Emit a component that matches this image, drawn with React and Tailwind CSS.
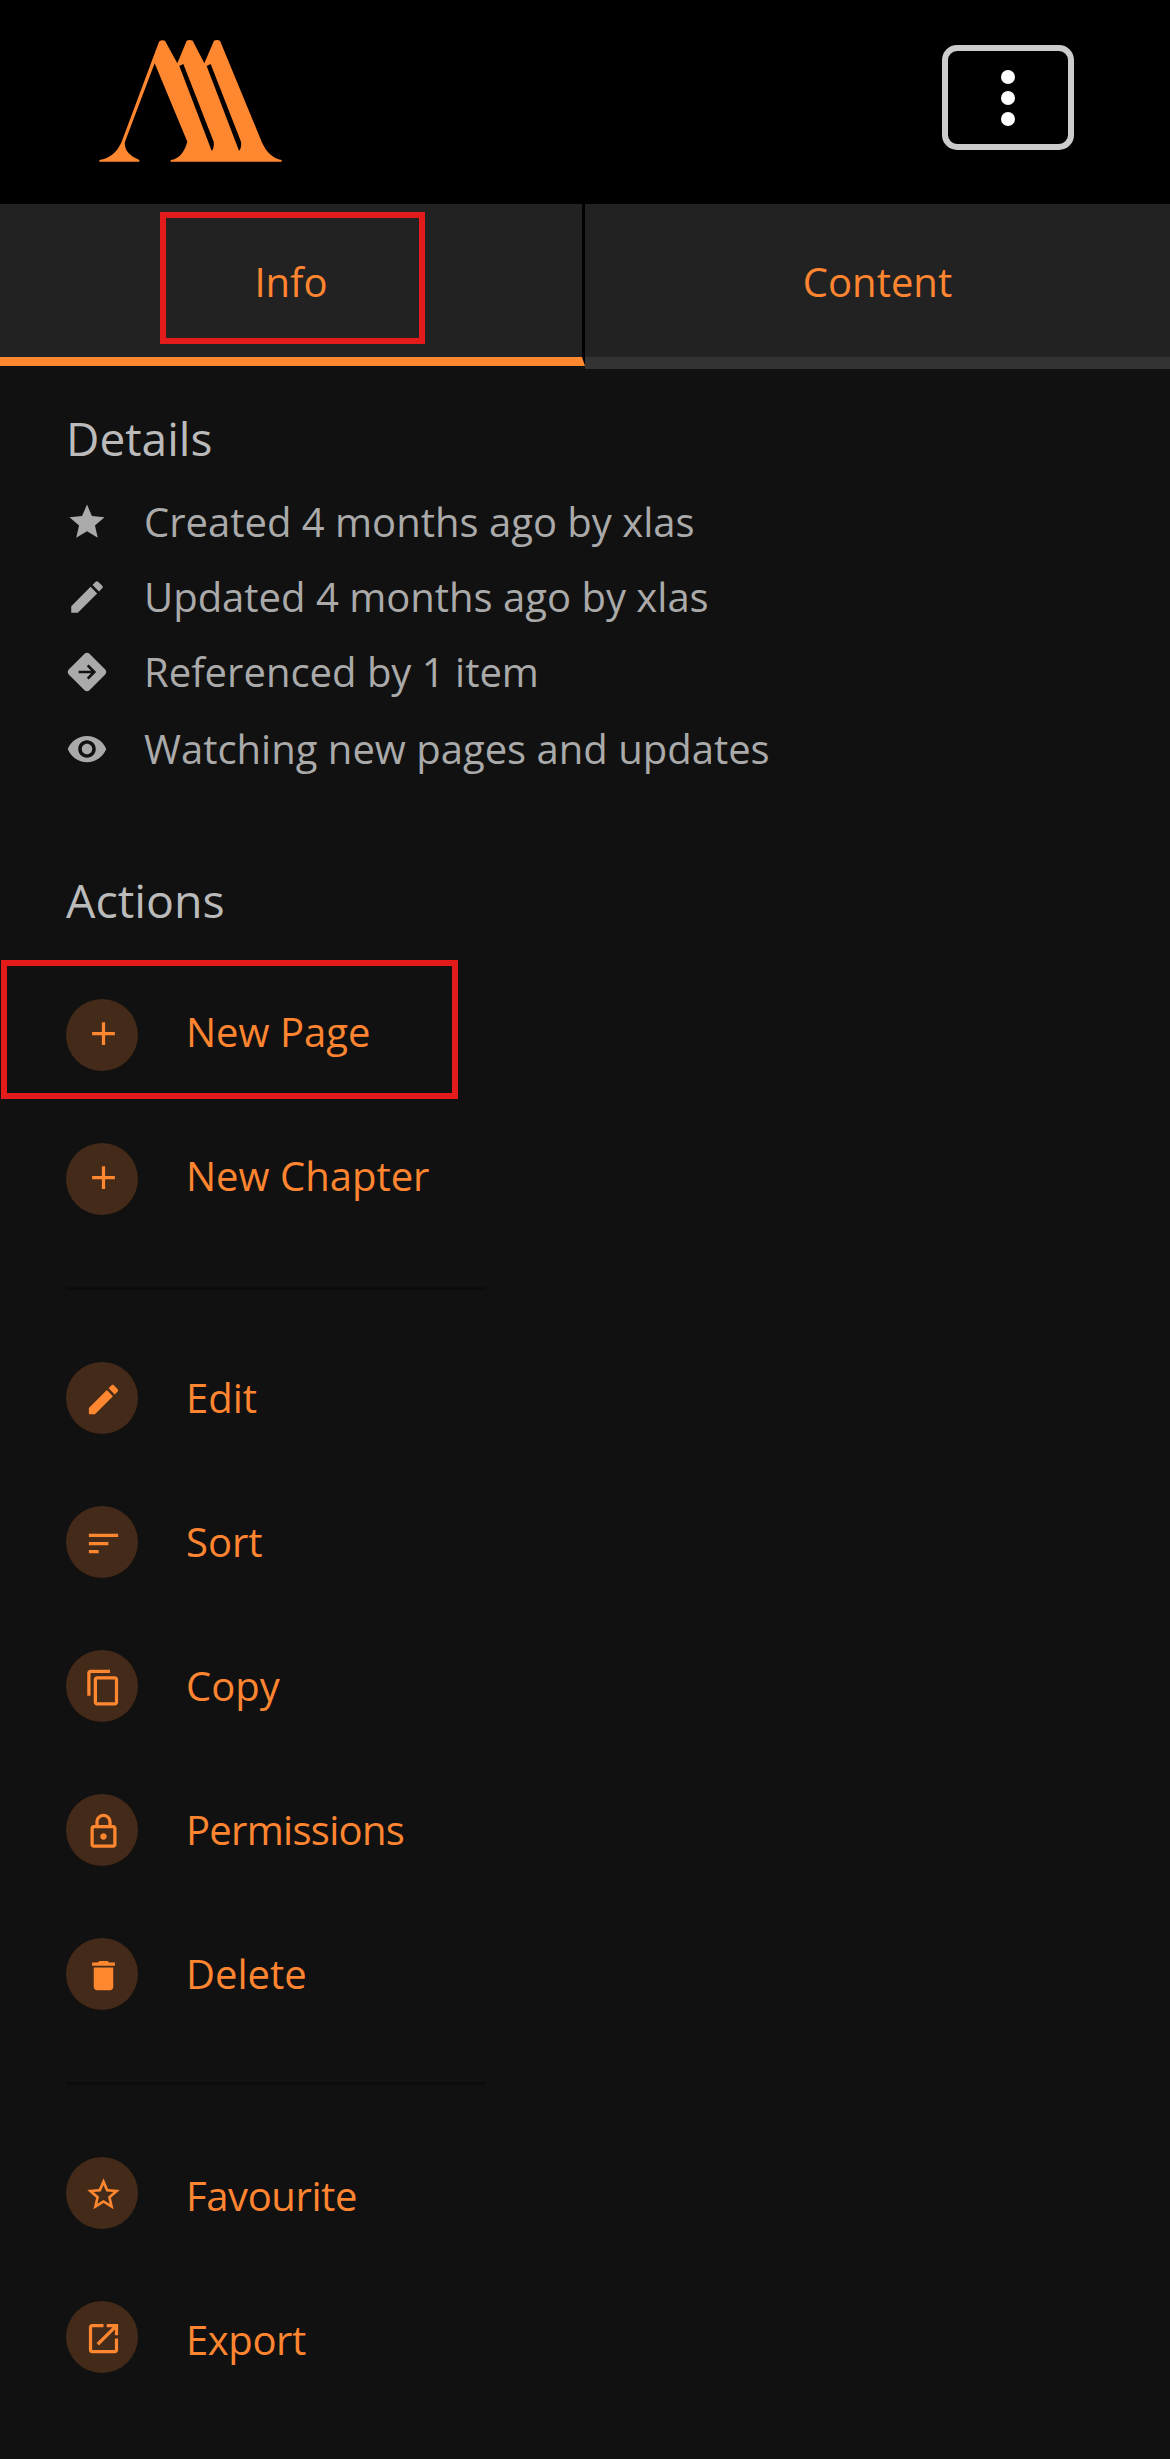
const orange = '#ff8730';

const paths = {
  star: 'M12 17.27L18.18 21l-1.64-7.03L22 9.24l-7.19-.61L12 2 9.19 8.63 2 9.24l5.46 4.73L5.82 21z',
  edit: 'M3 17.25V21h3.75L17.81 9.94l-3.75-3.75L3 17.25zM20.71 7.04c.39-.39.39-1.02 0-1.41l-2.34-2.34c-.39-.39-1.02-.39-1.41 0l-1.83 1.83 3.75 3.75 1.83-1.83z',
  eye: 'M12 4.5C7 4.5 2.73 7.61 1 12c1.73 4.39 6 7.5 11 7.5s9.27-3.11 11-7.5c-1.73-4.39-6-7.5-11-7.5zM12 17c-2.76 0-5-2.24-5-5s2.24-5 5-5 5 2.24 5 5-2.24 5-5 5zm0-8c-1.66 0-3 1.34-3 3s1.34 3 3 3 3-1.34 3-3-1.34-3-3-3z',
  add: 'M19 13h-6v6h-2v-6H5v-2h6V5h2v6h6v2z',
  sort: 'M3 18h6v-2H3v2zM3 6v2h18V6H3zm0 7h12v-2H3v2z',
  copy: 'M16 1H4c-1.1 0-2 .9-2 2v14h2V3h12V1zm3 4H8c-1.1 0-2 .9-2 2v14c0 1.1.9 2 2 2h11c1.1 0 2-.9 2-2V7c0-1.1-.9-2-2-2zm0 16H8V7h11v14z',
  lock: 'M18 8h-1V6c0-2.76-2.24-5-5-5S7 3.24 7 6v2H6c-1.1 0-2 .9-2 2v10c0 1.1.9 2 2 2h12c1.1 0 2-.9 2-2V10c0-1.1-.9-2-2-2zM9 6c0-1.66 1.34-3 3-3s3 1.34 3 3v2H9V6zm9 14H6V10h12v10zm-6-3c1.1 0 2-.9 2-2s-.9-2-2-2-2 .9-2 2 .9 2 2 2z',
  trash: 'M6 19c0 1.1.9 2 2 2h8c1.1 0 2-.9 2-2V7H6v12zM19 4h-3.5l-1-1h-5l-1 1H5v2h14V4z',
  starBorder: 'M22 9.24l-7.19-.62L12 2 9.19 8.63 2 9.24l5.46 4.73L5.82 21 12 17.27 18.18 21l-1.63-7.03L22 9.24zM12 15.4l-3.76 2.27 1-4.28-3.32-2.88 4.38-.38L12 6.1l1.71 4.04 4.38.38-3.32 2.88 1 4.28L12 15.4z',
  export: 'M19 19H5V5h7V3H5c-1.11 0-2 .9-2 2v14c0 1.1.89 2 2 2h14c1.1 0 2-.9 2-2v-7h-2v7zM14 3v2h3.59l-9.83 9.83 1.41 1.41L19 6.41V10h2V3h-7z',
};

const Icon = ({ d, className }) => (
  <svg viewBox="0 0 24 24" fill="currentColor" className={className}>
    <path d={d} />
  </svg>
);

const ReferenceIcon = () => (
  <svg viewBox="0 0 24 24" className="w-[42px] h-[42px] shrink-0">
    <path fill="#aaaaaa" d="M22.43 10.59l-9.01-9.01c-.75-.75-2.07-.76-2.83 0l-9 9c-.78.78-.78 2.04 0 2.82l9 9c.39.39.9.58 1.41.58.51 0 1.02-.19 1.41-.58l8.99-8.99c.79-.76.8-2.02.03-2.82z" />
    <path fill="none" stroke="#111111" strokeWidth="1.5" d="M7.2 12h8.8M12.4 8.2l3.8 3.8-3.8 3.8" />
  </svg>
);

const Logo = () => (
  <svg viewBox="0 0 780 480" className="w-[260px] h-[160px]">
    <path
      fill={orange}
      fillRule="evenodd"
      d="M118 420Q165 412 185 365L297 65Q305 58 315 62L352 130L380 62Q388 58 398 62L433 130L462 62Q470 58 480 62L605 365Q625 412 665 420L665 425L332 425L332 420Q368 415 382 365L284 130L195 365Q190 400 238 420L238 425L118 425ZM358 138L455 392Q463 385 461 365L370 132ZM440 138L537 392Q545 385 543 365L452 132Z"
    />
  </svg>
);

const DetailRow = ({ icon, children, className = 'h-[75px]' }) => (
  <div className={`flex items-center gap-[36px] text-[#aaaaaa] ${className}`}>
    {icon}
    <span>{children}</span>
  </div>
);

const ActionRow = ({ d, children, textClass = '', circleClass = 'pt-[2px]' }) => (
  <div className="flex items-center gap-[48px] h-[72px] text-[#ff8530]">
    <div className={`w-[72px] h-[72px] rounded-full bg-[#442a18] flex items-center justify-center pl-[2px] shrink-0 ${circleClass}`}>
      <Icon d={d} className="w-[39px] h-[39px] text-[#ff8730]" />
    </div>
    <span className={textClass}>{children}</span>
  </div>
);

export default function App() {
  return (
    <div className="min-h-[2459px] bg-[#111111] text-[40px] leading-[56px] font-['Open_Sans',sans-serif]">
      <header className="h-[204px] bg-black flex justify-between pl-[60px] pr-[96px]">
        <div className="pt-[20px]">
          <Logo />
        </div>
        <div className="mt-[45px] w-[132px] h-[105px] border-[6px] border-[#cccccc] rounded-[15px] flex flex-col items-center justify-center gap-[7px]">
          <span className="w-[14px] h-[14px] rounded-full bg-white" />
          <span className="w-[14px] h-[14px] rounded-full bg-white" />
          <span className="w-[14px] h-[14px] rounded-full bg-white" />
        </div>
      </header>

      <div className="grid grid-cols-[585px_585px] h-[165px] text-[#ff8530]">
        <div className="relative h-[162px] pt-[3px] bg-[#222222] border-b-[9px] border-b-[#ff8730] border-r-[3px] border-r-black flex items-center justify-center">
          Info
          <div className="absolute left-[160px] top-[8px] w-[265px] h-[132px] border-[6px] border-[#e31b1b]" />
        </div>
        <div className="pt-[3px] bg-[#222222] border-b-[12px] border-b-[#333333] flex items-center justify-center">
          Content
        </div>
      </div>

      <main className="px-[66px] pt-[36px]">
        <h5 className="text-[46px] leading-[66px] text-[#bbbbbb]">Details</h5>
        <div className="mt-[13px]">
          <DetailRow icon={<Icon d={paths.star} className="w-[42px] h-[42px] shrink-0" />}>Created 4 months ago by xlas</DetailRow>
          <DetailRow icon={<Icon d={paths.edit} className="w-[42px] h-[42px] shrink-0" />}>Updated 4 months ago by xlas</DetailRow>
          <DetailRow icon={<ReferenceIcon />}>Referenced by 1 item</DetailRow>
          <DetailRow className="h-[77px] pt-[2px]" icon={<Icon d={paths.eye} className="w-[42px] h-[42px] shrink-0" />}>Watching new pages and updates</DetailRow>
        </div>

        <h5 className="mt-[81px] text-[46.5px] leading-[66px] text-[#bbbbbb]">Actions</h5>

        <div className="mt-[66px] flex flex-col gap-[72px]">
          <div className="relative">
            <ActionRow d={paths.add} textClass="pb-[6px]" circleClass="pb-[3px]">New Page</ActionRow>
            <div className="absolute left-[-65px] top-[-39px] w-[457px] h-[139px] border-[6px] border-[#e31b1b]" />
          </div>
          <ActionRow d={paths.add} textClass="pb-[6px]" circleClass="pb-[3px]">New Chapter</ActionRow>
        </div>

        <hr className="w-[420px] mt-[72px] mb-[72px] border-0 h-[3px] bg-[#0c0c0c]" />

        <div className="flex flex-col gap-[72px]">
          <ActionRow d={paths.edit}>Edit</ActionRow>
          <ActionRow d={paths.sort}>Sort</ActionRow>
          <ActionRow d={paths.copy}>Copy</ActionRow>
          <ActionRow d={paths.lock} textClass="tracking-[-0.7px]">Permissions</ActionRow>
          <ActionRow d={paths.trash}>Delete</ActionRow>
        </div>

        <hr className="w-[420px] mt-[72px] mb-[72px] border-0 h-[3px] bg-[#0c0c0c]" />

        <div className="flex flex-col gap-[72px]">
          <ActionRow d={paths.starBorder} textClass="pt-[6px] tracking-[-0.4px]">Favourite</ActionRow>
          <ActionRow d={paths.export} textClass="pt-[6px] tracking-[-0.4px]">Export</ActionRow>
        </div>
      </main>
    </div>
  );
}
